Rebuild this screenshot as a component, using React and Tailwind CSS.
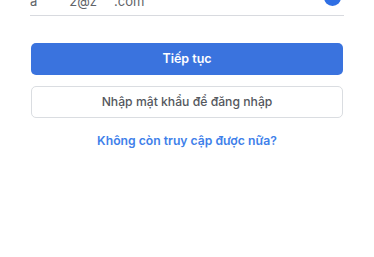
export default function App() {
  return (
    <div className="w-[374px] h-[257px] bg-white overflow-hidden" style={{ fontFamily: 'Inter, "Noto Sans", sans-serif' }}>
      <div className="px-[30px]">
        <div className="mt-[-12px] h-[28px] flex items-center justify-between border-b border-[#d8dadf]">
          <div className="flex text-[13px] text-[#5f6368] leading-none">
            <span>a</span>
            <span className="ml-[32px]">2@z</span>
            <span className="ml-[17px]">.com</span>
          </div>
          <div className="w-[17px] h-[17px] rounded-full bg-[#2f6fe4] mr-[3px] mt-[-8px]"></div>
        </div>
        <button className="mt-[27px] ml-px w-[312px] h-[32px] rounded-[5px] bg-[#3a73de] text-white text-[12.5px] font-semibold flex items-center justify-center">
          Tiếp tục
        </button>
        <button className="mt-[11px] ml-px w-[312px] h-[32px] rounded-[5px] border border-[#dadde1] bg-white text-[#55585e] text-[12.2px] font-medium flex items-center justify-center">
          Nhập mật khẩu để đăng nhập
        </button>
        <div className="mt-[14px] text-center text-[12.2px] font-semibold text-[#4080ea]">
          Không còn truy cập được nữa?
        </div>
      </div>
    </div>
  );
}
